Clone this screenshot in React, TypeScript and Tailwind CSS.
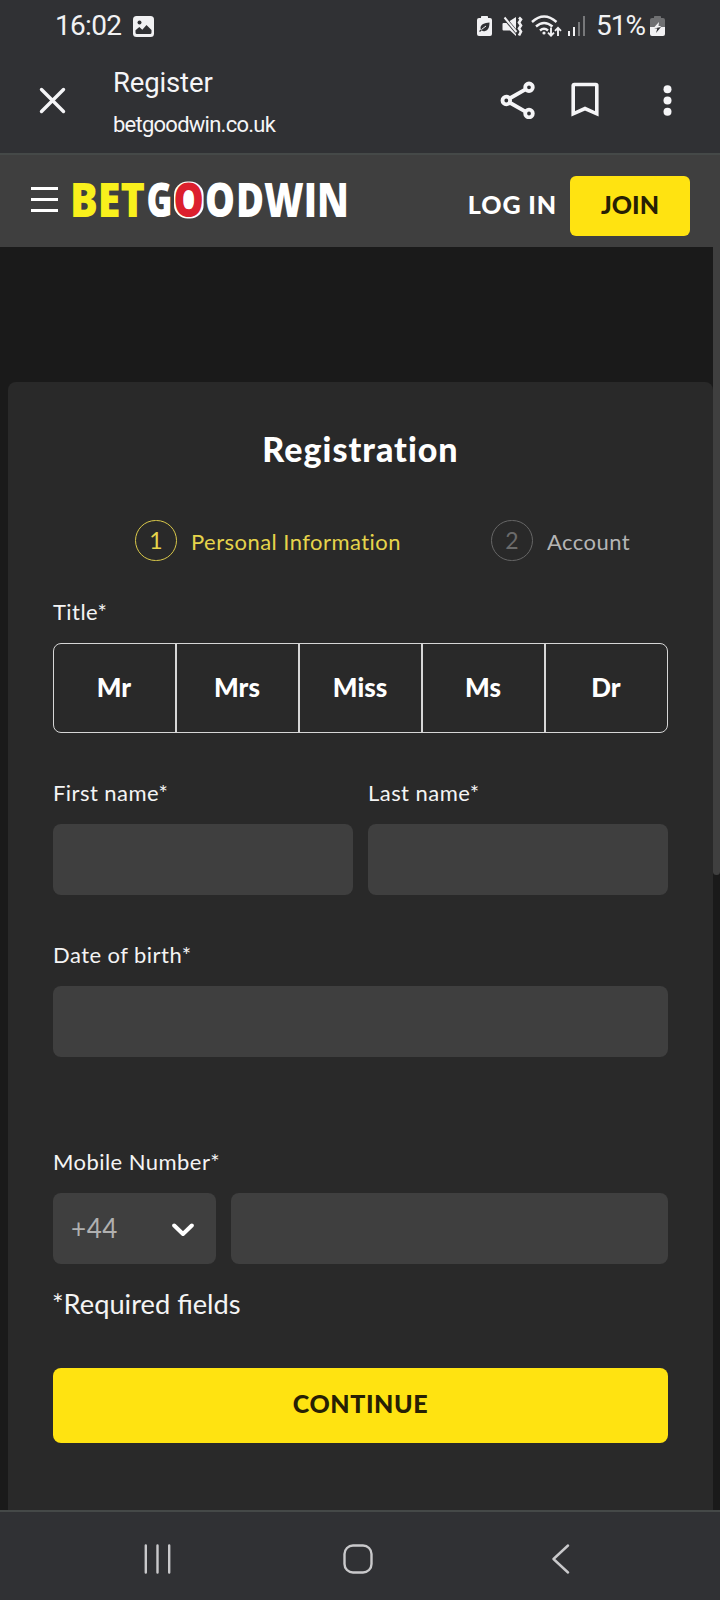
import type { ReactNode } from 'react'

interface StepProps {
  index: number
  label: string
  isActive?: boolean
}

interface FieldProps {
  label: string
  name: string
}

const titles = ['Mr', 'Mrs', 'Miss', 'Ms', 'Dr']

const StatusBar = () => (
  <div className="flex h-[52px] items-center justify-between pr-[55px] pl-[55px] font-['Roboto',sans-serif] text-[28px] leading-none text-[#f1f1f3]">
    <div className="flex items-center">
      <span className="w-[78px] tracking-[-0.7px]">16:02</span>
      <svg className="h-[21px] w-[21px]" viewBox="0 0 21 21">
        <rect width="21" height="21" rx="3.5" fill="#f1f1f3" />
        <circle cx="6.5" cy="6.5" r="2" fill="#303134" />
        <path
          d="M2.5 16.5v-2.2l3.8-3.4 3 2.8 4.2-4.6 5 5v2.4q0 1.5-1.5 1.5h-13q-1.5 0-1.5-1.5Z"
          fill="#303134"
        />
      </svg>
    </div>
    <div className="flex items-center">
      <svg className="h-5 w-[15px]" viewBox="0 0 15 20">
        <path
          d="M4 2V.8Q4 0 4.8 0h5.4q.8 0 .8.8V2h2q2 0 2 2v14q0 2-2 2H2q-2 0-2-2V4q0-2 2-2Z"
          fill="#f1f1f3"
        />
        <path
          d="M12.5 6.5c-5 .4-9 2-9 5.3 0 2.5 2 3.7 4 3.4 4-.5 5-4.5 5-8.7Z"
          fill="#303134"
        />
        <path d="m2.5 15.5 1.8-1.5" stroke="#303134" strokeWidth="1.3" />
        <path d="m4.5 13.5 4.5-3.5" stroke="#f1f1f3" strokeWidth="1" />
      </svg>
      <svg
        className="ml-[10px] h-[21px] w-[22px]"
        viewBox="0 0 22 21"
        fill="none"
      >
        <path
          d="M1.5 7h4l3-2.5L14 1v19l-6-5.5H1.5q-1 0-1-1V8q0-1 1-1Z"
          fill="#f1f1f3"
        />
        <path d="M1 0 16 18" stroke="#303134" strokeWidth="3.5" />
        <path d="m2.5 1.5 12 14.5" stroke="#f1f1f3" strokeWidth="2" />
        <path
          d="m17 1.5 2 2-2 3 2 3-2 3 2 3-2 4"
          stroke="#f1f1f3"
          strokeWidth="2.6"
        />
      </svg>
      <svg
        className="ml-[7px] h-[22px] w-[31px]"
        viewBox="0 0 31 22"
        fill="none"
        stroke="#f1f1f3"
        strokeWidth="2.4"
      >
        <path d="M1 7q12-11 24.5 0" />
        <path d="M5 11.5q8-7 16.5 0" />
        <path d="M9 15.5q4-3.5 8 0" />
        <circle cx="13" cy="18" r="1.6" fill="#f1f1f3" stroke="none" />
        <path
          d="M20 12.5v8m-3-2.8 3 3 3-3M27 21v-8m-3 2.8 3-3 3 3"
          strokeWidth="1.9"
        />
      </svg>
      <svg className="ml-[5px] h-[20px] w-[19px]" viewBox="0 0 19 20">
        <path d="M1 15h2v5H1zM6 11h2v9H6z" fill="#f1f1f3" />
        <path d="M11 6h2v14h-2zM16 0h2v20h-2z" fill="#77787a" />
      </svg>
      <span className="ml-[10px] w-[54px] tracking-[-1px]">51%</span>
      <svg className="h-5 w-[15px]" viewBox="0 0 15 20">
        <path
          d="M4 2V.8Q4 0 4.8 0h5.4q.8 0 .8.8V2h2q2 0 2 2v7H0V4q0-2 2-2Z"
          fill="#6f7072"
        />
        <path d="M0 11h15v7q0 2-2 2H2q-2 0-2-2Z" fill="#f1f1f3" />
        <path d="m9 6-5 5.5h3L6 16l5-6H8.5Z" fill="#f1f1f3" />
        <path d="m4 12.5h3.3L6 17l5-6" fill="#303134" />
      </svg>
    </div>
  </div>
)

const BrowserBar = () => (
  <div className="flex h-[101px] items-start pt-[15px] font-['Roboto',sans-serif] text-[#f5f5f7]">
    <svg
      className="mt-[20px] ml-[39px] h-[27px] w-[27px]"
      viewBox="0 0 27 27"
      fill="none"
      stroke="currentColor"
      strokeWidth="3.4"
      strokeLinecap="round"
    >
      <path d="m2.5 2.5 22 22m0-22-22 22" />
    </svg>
    <div className="ml-[47px] w-[387px]">
      <h1 className="text-[27.5px] leading-[32px] tracking-[-0.15px]">
        Register
      </h1>
      <p className="mt-[13px] text-[22px] leading-[26px] tracking-[-0.75px]">
        betgoodwin.co.uk
      </p>
    </div>
    <svg
      className="mt-[14px] h-[38px] w-[36px]"
      viewBox="0 0 36 38"
      fill="none"
      stroke="currentColor"
      strokeWidth="3.8"
    >
      <circle cx="6.3" cy="19.5" r="3.8" />
      <circle cx="29" cy="6.3" r="3.8" />
      <circle cx="29" cy="32.5" r="3.8" />
      <path d="m9.5 17.5 16-9.2m-16 13.2 16 9.2" />
    </svg>
    <svg
      className="mt-[15px] ml-[35px] h-[36px] w-[28px]"
      viewBox="0 0 28 36"
      fill="none"
      stroke="currentColor"
      strokeWidth="3.6"
    >
      <path d="M2.2 31.8V3.5q0-1 1-1h21.6q1 0 1 1v28.3L14 26.5Z" />
    </svg>
    <svg
      className="mt-[17px] ml-[62px] h-[32px] w-[12px]"
      viewBox="0 0 12 32"
      fill="currentColor"
    >
      <circle cx="6.5" cy="5.3" r="4" />
      <circle cx="6.5" cy="16.5" r="4" />
      <circle cx="6.5" cy="27.8" r="4" />
    </svg>
  </div>
)

const Logo = () => (
  <svg
    className="mt-[10px] ml-[12px] h-[70px] w-[300px] overflow-visible font-['Open_Sans',sans-serif] font-extrabold"
    viewBox="0 0 300 70"
    fontSize="47.5"
    fill="#fff"
  >
    <text
      x="0"
      y="52"
      textLength="75"
      lengthAdjust="spacingAndGlyphs"
      fill="#f9f01c"
    >
      BET
    </text>
    <text x="76.5" y="52" textLength="26" lengthAdjust="spacingAndGlyphs">
      G
    </text>
    <rect x="104" y="16.5" width="29.6" height="37" rx="13.5" />
    <text
      x="103.6"
      y="52"
      textLength="30.4"
      lengthAdjust="spacingAndGlyphs"
      fill="#dc1f2d"
    >
      O
    </text>
    <text x="135" y="52" textLength="30" lengthAdjust="spacingAndGlyphs">
      O
    </text>
    <text x="166" y="52" textLength="113" lengthAdjust="spacingAndGlyphs">
      DWIN
    </text>
  </svg>
)

const SiteHeader = () => (
  <header className="flex h-[94px] items-start border-t-2 border-[#454948] bg-[#3f3f3f] text-[25px] font-black">
    <button
      className="mt-[32px] ml-[31px] flex w-[27px] flex-col gap-2"
      title="Menu"
    >
      <span className="h-[3px] w-full bg-white" />
      <span className="h-[3px] w-full bg-white" />
      <span className="h-[3px] w-full bg-white" />
    </button>
    <Logo />
    <div className="mt-[21px] mr-[30px] ml-auto flex h-[60px] items-center">
      <a className="mr-[13px] pb-[2px] tracking-[0.9px] text-white">LOG IN</a>
      <button className="h-full w-[120px] rounded-md bg-[#ffe311] pb-[2px] text-[#272004]">
        JOIN
      </button>
    </div>
  </header>
)

const Step = ({ index, label, isActive }: StepProps) => (
  <div className="flex items-center gap-[14px] text-[22px]">
    <span
      className={`flex h-[41px] w-[42px] items-center justify-center rounded-full border text-[23px] ${
        isActive
          ? 'border-[#d9c84a] text-[#e6d44b]'
          : 'border-[#666666] text-[#6b6b6b]'
      }`}
    >
      {index}
    </span>
    <span
      className={`pt-[1px] tracking-[0.45px] ${
        isActive ? 'text-[#e6d44b]' : 'text-[#b5b5b5]'
      }`}
    >
      {label}
    </span>
  </div>
)

const Label = ({ children }: { children: ReactNode }) => (
  <span className="block h-7 text-[22px] leading-7 tracking-[0.45px]">
    {children}
  </span>
)

const Field = ({ label, name }: FieldProps) => (
  <label className="block flex-1">
    <Label>{label}</Label>
    <input
      name={name}
      className="mt-[17px] block h-[71px] w-full rounded-lg bg-[#3f3f3f]"
    />
  </label>
)

const RegistrationForm = () => (
  <form className="ml-2 h-[1128px] w-[705px] rounded-t-lg bg-[#292929] px-[45px] pt-[47px] text-[#f4f4f4]">
    <h2 className="h-10 text-center text-[34px] leading-10 font-black tracking-[1px] text-white">
      Registration
    </h2>
    <div className="mt-[51px] flex h-[41px] pl-[82px]">
      <div className="w-[356px]">
        <Step index={1} label="Personal Information" isActive />
      </div>
      <Step index={2} label="Account" />
    </div>

    <div className="mt-[37px]">
      <Label>Title*</Label>
      <div className="mt-[17px] flex h-[90px] divide-x-2 divide-[#d6d6d6] rounded-lg border border-[#d6d6d6]">
        {titles.map((title) => (
          <button
            type="button"
            className="flex-1 pr-px pb-[2px] text-[26px] font-black text-white"
            key={title}
          >
            {title}
          </button>
        ))}
      </div>
    </div>

    <div className="mt-[46px] flex gap-[15px]">
      <Field label="First name*" name="first_name" />
      <Field label="Last name*" name="last_name" />
    </div>

    <div className="mt-[46px]">
      <Field label="Date of birth*" name="date_of_birth" />
    </div>

    <div className="mt-[91px]">
      <Label>Mobile Number*</Label>
      <div className="mt-[17px] flex h-[71px] gap-[15px]">
        <button
          type="button"
          className="flex w-[163px] items-center justify-between rounded-lg bg-[#3f3f3f] pr-[22px] pl-[18px] text-[26px] tracking-[0.6px] text-[#b0b0b0]"
        >
          +44
          <svg
            className="mt-[3px] h-[14px] w-[22px]"
            viewBox="0 0 22 14"
            fill="none"
            stroke="#fff"
            strokeWidth="4"
            strokeLinecap="round"
            strokeLinejoin="round"
          >
            <path d="m2.2 2.5 8.8 8.5 8.8-8.5" />
          </svg>
        </button>
        <input name="mobile" className="h-full flex-1 rounded-lg bg-[#3f3f3f]" />
      </div>
    </div>

    <p className="mt-[25px] -ml-px h-[30px] text-[27.25px] leading-[30px]">
      *Required fields
    </p>
    <button
      type="button"
      className="mt-[49px] h-[75px] w-full rounded-lg bg-[#ffe311] pb-[4px] text-[25px] font-black tracking-[0.6px] text-[#272004]"
    >
      CONTINUE
    </button>
  </form>
)

const NavigationBar = () => (
  <nav className="flex h-[90px] items-center border-t-2 border-[#454948] bg-[#303134] pt-[5px]">
    <svg
      className="ml-[144px] h-[30px] w-[27px]"
      viewBox="0 0 27 30"
      stroke="#c9c9cb"
      strokeWidth="2.4"
      strokeLinecap="round"
    >
      <path d="M1.8 1.5v27M13.5 1.5v27M25.2 1.5v27" />
    </svg>
    <svg className="ml-[172px] h-[30px] w-[30px]" viewBox="0 0 30 30" fill="none">
      <rect
        x="1.5"
        y="1.5"
        width="27"
        height="27"
        rx="8.5"
        stroke="#c9c9cb"
        strokeWidth="2.4"
      />
    </svg>
    <svg
      className="ml-[178px] h-[30px] w-[19px]"
      viewBox="0 0 19 30"
      fill="none"
      stroke="#c9c9cb"
      strokeWidth="2.4"
      strokeLinecap="round"
      strokeLinejoin="round"
    >
      <path d="M17 1.5 2.5 15 17 28.5" />
    </svg>
  </nav>
)

export default function App() {
  return (
    <div className="flex h-[1600px] w-[720px] flex-col overflow-hidden bg-[#1a1a1a] font-['Lato',sans-serif]">
      <div className="bg-[#303134]">
        <StatusBar />
        <BrowserBar />
      </div>
      <SiteHeader />
      <main className="flex flex-1 justify-between">
        <div className="pt-[135px]">
          <RegistrationForm />
        </div>
        <div className="h-[628px] w-[7px] rounded-b-sm bg-[#3f3f3f]" />
      </main>
      <NavigationBar />
    </div>
  )
}
